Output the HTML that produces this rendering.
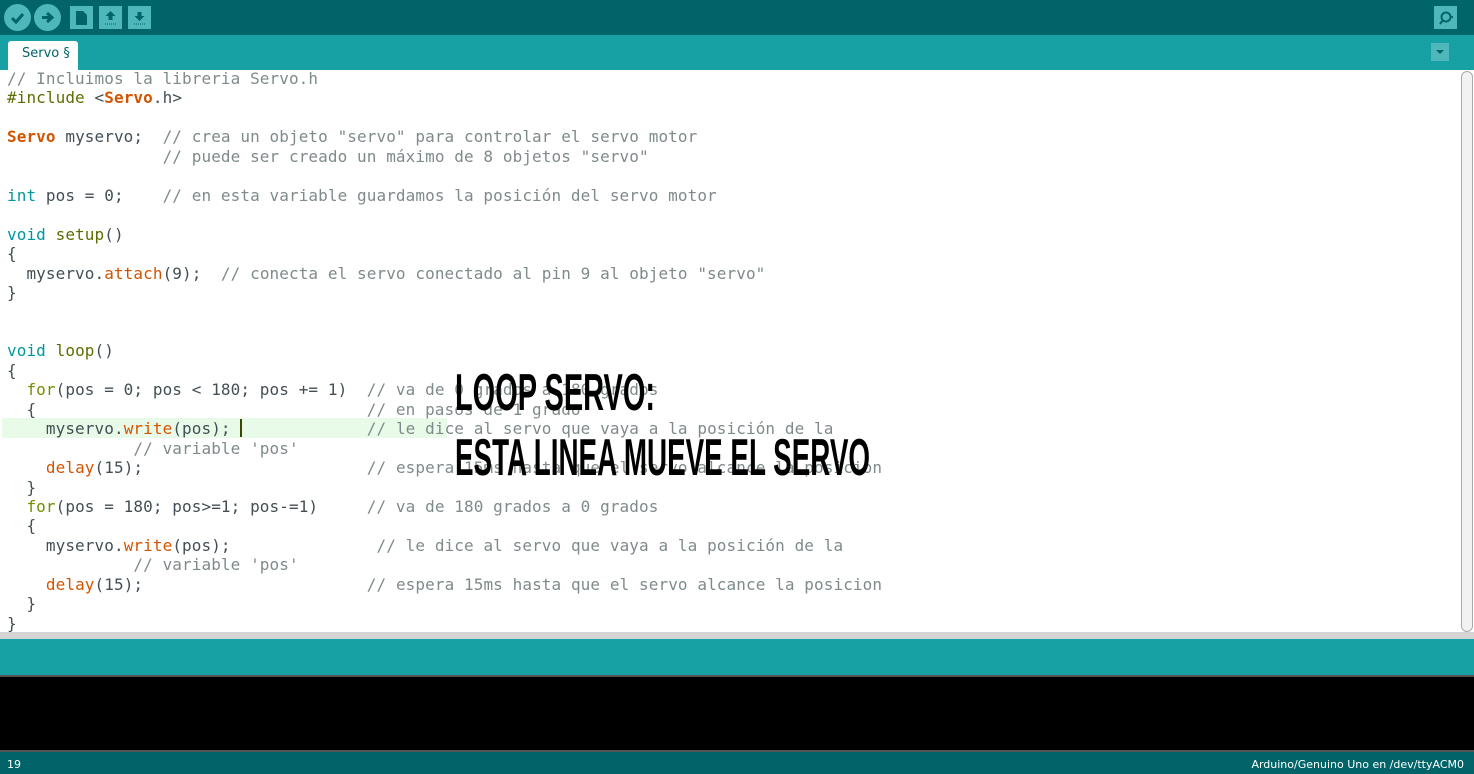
<!DOCTYPE html>
<html><head><meta charset="utf-8"><style>
*{margin:0;padding:0;box-sizing:border-box}
body{width:1474px;height:774px;overflow:hidden;background:#fff;position:relative;font-family:"DejaVu Sans Mono","Liberation Mono",monospace}
.tb{position:absolute;left:0;top:0;width:1474px;height:35px;background:#006468}
.tabs{position:absolute;left:0;top:35px;width:1474px;height:35px;background:#17a1a5}
.tab{position:absolute;left:8px;top:6px;width:70px;height:29px;background:#fff;border-radius:3px 3px 0 0;font:13px "DejaVu Sans",sans-serif;color:#006468;padding:5px 0 0 14px}
.btn{position:absolute;background:#4db7bb}
.rnd{position:absolute;top:4px;width:27px;height:27px;border-radius:50%;background:#4db7bb}
.ed{position:absolute;left:0;top:69px;width:1460px;height:563px;overflow:hidden}
pre{font:16px/19.46px "DejaVu Sans Mono",monospace;letter-spacing:0.09px;color:#434f54;padding-left:7px;position:relative;white-space:pre}
.c{color:#7f8a8b}.k{color:#00979c}.f{color:#728e00}.s{color:#5e6d03}.o{color:#d35400}.b{color:#d35400;font-weight:bold}
.hl{position:absolute;left:2px;width:445px;height:20px;background:#e8fbe8}
.cur{position:absolute;left:240px;width:2px;height:18px;background:#3b4a00}
.sb{position:absolute;left:1461px;top:71px;width:12px;height:561px;border:1px solid #aaa;border-radius:6px;background:#f2f2f2}
.div{position:absolute;left:0;top:632px;width:1474px;height:7px;background:#d4d4d4}
.con1{position:absolute;left:0;top:639px;width:1474px;height:36px;background:#17a1a5}
.con2{position:absolute;left:0;top:675px;width:1474px;height:77px;background:#000;border-top:2px solid #555;border-bottom:2px solid #555}
.st{position:absolute;left:0;top:752px;width:1474px;height:22px;background:#006468;color:#fff;font:11px "DejaVu Sans",sans-serif;padding:6px 7px 0}
</style></head><body>
<div class="tb">
<div class="rnd" style="left:4px"><svg width="27" height="27"><path d="M8 14l4 4 7-8" stroke="#006468" stroke-width="3" fill="none"/></svg></div>
<div class="rnd" style="left:34px"><svg width="27" height="27"><path d="M8 13.5h9M13 9l5 4.5-5 4.5" stroke="#006468" stroke-width="3" fill="none"/></svg></div>
<div class="btn" style="left:70px;top:6px;width:23px;height:23px"><svg width="23" height="23"><path d="M6 5h7l4 4v10H6z" fill="#006468"/></svg></div>
<div class="btn" style="left:99px;top:6px;width:23px;height:23px"><svg width="23" height="23"><path d="M11.5 5l5 5h-3v4h-4v-4h-3z" fill="#006468"/><path d="M6 18h11" stroke="#006468" stroke-dasharray="1 1"/></svg></div>
<div class="btn" style="left:128px;top:6px;width:23px;height:23px"><svg width="23" height="23"><path d="M11.5 15l5-5h-3V6h-4v4h-3z" fill="#006468"/><path d="M6 18h11" stroke="#006468" stroke-dasharray="1 1"/></svg></div>
<div class="btn" style="left:1434px;top:6px;width:23px;height:23px"><svg width="23" height="23"><circle cx="12" cy="11" r="4.5" stroke="#006468" stroke-width="2" fill="none"/><path d="M9 14l-3 4M16 11h3" stroke="#006468" stroke-width="2"/></svg></div>
</div>
<div class="tabs"><div class="tab">Servo §</div>
<div class="btn" style="left:1431px;top:8px;width:18px;height:18px"><svg width="18" height="18"><path d="M5 7h8l-4 4z" fill="#006468"/></svg></div></div>
<div class="ed"><div class="hl" style="top:349px"></div><div class="cur" style="top:350px"></div><pre><span class="c">// Incluimos la libreria Servo.h</span>
<span class="s">#include</span> &lt;<span class="b">Servo</span>.h&gt;

<span class="b">Servo</span> myservo;  <span class="c">// crea un objeto "servo" para controlar el servo motor</span>
                <span class="c">// puede ser creado un máximo de 8 objetos "servo"</span>

<span class="k">int</span> pos = 0;    <span class="c">// en esta variable guardamos la posición del servo motor</span>

<span class="k">void</span> <span class="s">setup</span>()
{
  myservo.<span class="o">attach</span>(9);  <span class="c">// conecta el servo conectado al pin 9 al objeto "servo"</span>
}


<span class="k">void</span> <span class="s">loop</span>()
{
  <span class="f">for</span>(pos = 0; pos &lt; 180; pos += 1)  <span class="c">// va de 0 grados a 180 grados</span>
  {                                  <span class="c">// en pasos de 1 grado</span>
    myservo.<span class="o">write</span>(pos);              <span class="c">// le dice al servo que vaya a la posición de la</span>
             <span class="c">// variable 'pos'</span>
    <span class="o">delay</span>(15);                       <span class="c">// espera 15ms hasta que el servo alcance la posicion</span>
  }
  <span class="f">for</span>(pos = 180; pos&gt;=1; pos-=1)     <span class="c">// va de 180 grados a 0 grados</span>
  {
    myservo.<span class="o">write</span>(pos);               <span class="c">// le dice al servo que vaya a la posición de la</span>
             <span class="c">// variable 'pos'</span>
    <span class="o">delay</span>(15);                       <span class="c">// espera 15ms hasta que el servo alcance la posicion</span>
  }
}</pre></div>
<div class="sb"></div>
<div class="div"><svg width="1474" height="7"><path d="M725 4h1M728 4h1M731 4h1M734 4h1M737 4h1M740 4h1M743 4h1M746 4h1M749 4h1" stroke="#888"/></svg></div>
<div class="con1"></div><div class="con2"></div>
<div class="st"><span>19</span><span style="position:absolute;right:10px">Arduino/Genuino Uno en /dev/ttyACM0</span></div>
<svg style="position:absolute;left:0;top:0" width="1474" height="774">
<text x="455" y="410" font-family="Liberation Sans" font-weight="bold" font-size="52" textLength="200" lengthAdjust="spacingAndGlyphs" fill="#000">LOOP SERVO:</text>
<text x="455" y="475" font-family="Liberation Sans" font-weight="bold" font-size="52" textLength="415" lengthAdjust="spacingAndGlyphs" fill="#000">ESTA LINEA MUEVE EL SERVO</text>
</svg>
</body></html>
